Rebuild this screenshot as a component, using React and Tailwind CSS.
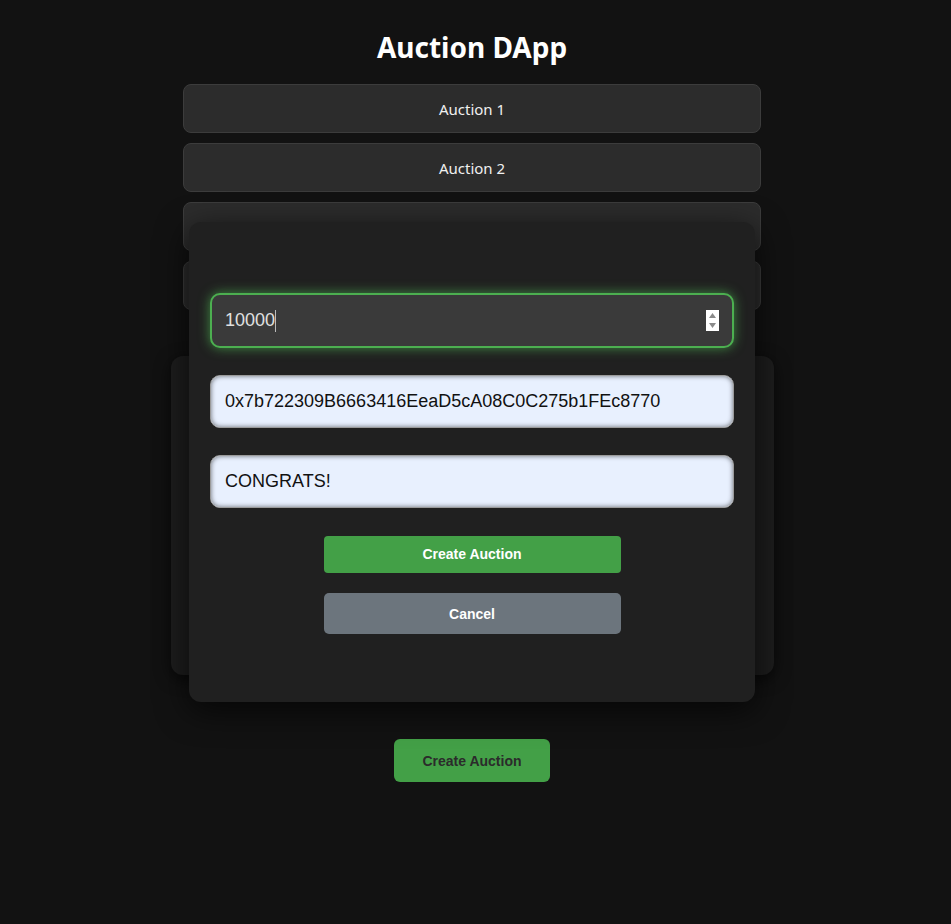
import React from "react";

export default function App() {
  const items = ["Auction 1", "Auction 2", "Auction 3", "Auction 4"];
  return (
    <div className="min-h-[924px] w-full bg-[#121212]">
      <div className="relative w-[944px] flex flex-col items-center pt-[28px]">
        <h1 className="text-[28px] leading-[38px] font-bold text-white font-['Noto_Sans',sans-serif]">
          Auction DApp
        </h1>
        <div className="mt-[18px] w-[578px] flex flex-col gap-[10px]">
          {items.map((t) => (
            <div
              key={t}
              className="h-[49px] pt-[2px] rounded-[8px] border border-[#3c3c3c] bg-[#2c2c2c] flex items-center justify-center text-[15px] text-[#f0f0f0] font-['Noto_Sans',sans-serif]"
            >
              {t}
            </div>
          ))}
        </div>
        <div className="mt-[46px] w-[603px] h-[319px] rounded-[12px] bg-[#1d1d1d] shadow-[0_4px_16px_rgba(0,0,0,0.6)]" />
        <button className="mt-[64px] w-[156px] h-[43px] pt-[2px] rounded-[6px] bg-[#43a047] text-[#2b2b2b] text-[14px] font-bold font-['Liberation_Sans',Arial,sans-serif]">
          Create Auction
        </button>

        <div className="absolute left-[189px] top-[222px] w-[566px] h-[480px] rounded-[12px] bg-[#202020] shadow-[0_8px_32px_rgba(0,0,0,0.7)] pt-[71px] px-[21px] flex flex-col items-center font-['Liberation_Sans',Arial,sans-serif]">
          <div className="w-full h-[55px] rounded-[10px] border-2 border-[#4caf50] bg-[#3a3a3a] shadow-[0_0_12px_rgba(76,175,80,0.75)] flex items-center pl-[13px] pr-[13px]">
            <span className="text-[18px] text-[#e0e0e0]">10000</span>
            <span className="w-[1px] h-[22px] bg-[#bbbbbb]" />
            <div className="ml-auto w-[13px] h-[21px] bg-white flex flex-col items-center justify-center gap-[5px]">
              <svg width="7" height="5" viewBox="0 0 7 5"><path d="M3.5 0L7 5H0z" fill="#8a8a8a" /></svg>
              <svg width="7" height="5" viewBox="0 0 7 5"><path d="M0 0h7L3.5 5z" fill="#8a8a8a" /></svg>
            </div>
          </div>
          <div className="mt-[27px] w-full h-[53px] rounded-[10px] border border-[#9a9a9a] bg-[#e8f0fe] shadow-[inset_0_0_5px_rgba(0,0,0,0.55)] flex items-center pl-[14px] text-[18px] text-[#111]">
            0x7b722309B6663416EeaD5cA08C0C275b1FEc8770
          </div>
          <div className="mt-[27px] w-full h-[53px] rounded-[10px] border border-[#9a9a9a] bg-[#e8f0fe] shadow-[inset_0_0_5px_rgba(0,0,0,0.55)] flex items-center pl-[14px] text-[18px] text-[#111]">
            CONGRATS!
          </div>
          <button className="mt-[28px] w-[297px] h-[37px] rounded-[4px] bg-[#43a047] text-white text-[14px] font-bold">
            Create Auction
          </button>
          <button className="mt-[20px] w-[297px] h-[41px] pt-[2px] rounded-[5px] bg-[#6c757d] text-white text-[14px] font-bold">
            Cancel
          </button>
        </div>
      </div>
    </div>
  );
}
